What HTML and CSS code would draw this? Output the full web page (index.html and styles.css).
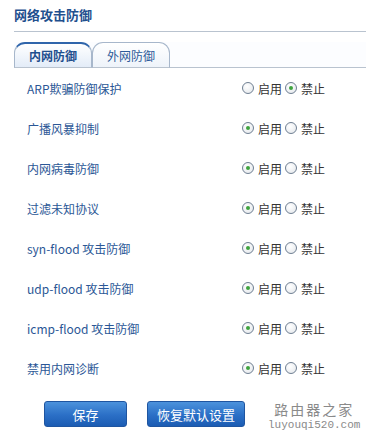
FILE: index.html
```html
<!DOCTYPE html>
<html lang="zh">
<head>
<meta charset="utf-8">
<link rel="stylesheet" href="styles.css">
</head>
<body>
<div class="page">
  <h1 class="title">网络攻击防御</h1>
  <div class="tabs">
    <div class="tab active">内网防御</div>
    <div class="tab">外网防御</div>
    <div class="tab-fill"></div>
  </div>
  <div class="rows">
    <div class="row"><span class="label">ARP欺骗防御保护</span><span class="opts"><span class="radio"></span><span class="opt">启用</span><span class="radio on"></span><span class="opt">禁止</span></span></div>
    <div class="row"><span class="label">广播风暴抑制</span><span class="opts"><span class="radio on"></span><span class="opt">启用</span><span class="radio"></span><span class="opt">禁止</span></span></div>
    <div class="row"><span class="label">内网病毒防御</span><span class="opts"><span class="radio on"></span><span class="opt">启用</span><span class="radio"></span><span class="opt">禁止</span></span></div>
    <div class="row"><span class="label">过滤未知协议</span><span class="opts"><span class="radio on"></span><span class="opt">启用</span><span class="radio"></span><span class="opt">禁止</span></span></div>
    <div class="row"><span class="label">syn-flood 攻击防御</span><span class="opts"><span class="radio on"></span><span class="opt">启用</span><span class="radio"></span><span class="opt">禁止</span></span></div>
    <div class="row"><span class="label">udp-flood 攻击防御</span><span class="opts"><span class="radio on"></span><span class="opt">启用</span><span class="radio"></span><span class="opt">禁止</span></span></div>
    <div class="row"><span class="label">icmp-flood 攻击防御</span><span class="opts"><span class="radio on"></span><span class="opt">启用</span><span class="radio"></span><span class="opt">禁止</span></span></div>
    <div class="row"><span class="label">禁用内网诊断</span><span class="opts"><span class="radio on"></span><span class="opt">启用</span><span class="radio"></span><span class="opt">禁止</span></span></div>
  </div>
  <div class="actions">
    <button class="btn save">保存</button>
    <button class="btn restore">恢复默认设置</button>
    <div class="watermark">
      <span class="wm-cn">路由器之家</span>
      <span class="wm-en">luyouqi520.com</span>
    </div>
  </div>
</div>
</body>
</html>
```
FILE: styles.css
```css
* { box-sizing: border-box; }
html, body { margin: 0; padding: 0; background: #ffffff; }
body {
  font-family: "Noto Sans CJK SC", "Noto Sans", sans-serif;
  width: 366px;
  height: 433px;
  overflow: hidden;
}
.page { padding-top: 7px; }
.title {
  margin: 0 0 0 14px;
  font-size: 13px;
  line-height: 16px;
  font-weight: bold;
  color: #1f4f8e;
  height: 25px;
  border-bottom: 1px solid #b9c3cf;
}
.tabs {
  display: flex;
  align-items: flex-end;
  margin-left: 14px;
  margin-top: 10px;
  height: 26px;
  background: #fcfdff;
}
.tab {
  width: 78px;
  height: 26px;
  border: 1px solid #a7b7cb;
  border-bottom: 1px solid #b9c3cf;
  border-radius: 11px 11px 0 0;
  font-size: 12px;
  line-height: 25px;
  text-align: center;
  color: #2d5a99;
  background: linear-gradient(#ffffff, #eef3fa);
}
.tab.active {
  border-top: 2px solid #2f65ab;
  font-weight: bold;
  color: #1f4f8e;
  line-height: 23px;
  background: linear-gradient(#ffffff, #e3ecf8);
}
.tab-fill {
  flex: 1;
  height: 26px;
  border-bottom: 1px solid #b9c3cf;
}
.rows { display: flex; flex-direction: column; }
.row {
  height: 40px;
  display: flex;
  align-items: center;
  padding-left: 27px;
}
.label {
  flex: 1;
  font-size: 12px;
  color: #2b5796;
}
.opts {
  display: flex;
  align-items: center;
  width: 124px;
  font-size: 12px;
  color: #333333;
}
.radio {
  width: 12px;
  height: 12px;
  border: 1px solid #6f7f92;
  border-radius: 50%;
  background: radial-gradient(circle at 40% 35%, #ffffff, #e2e6ea);
  margin-right: 4px;
  position: relative;
}
.radio.on::after {
  content: "";
  position: absolute;
  left: 3px;
  top: 3px;
  width: 4px;
  height: 4px;
  border-radius: 50%;
  background: #3fa33f;
}
.opt { margin-right: 3px; }
.actions {
  display: flex;
  align-items: center;
  padding-left: 44px;
  margin-top: 13px;
  height: 26px;
}
.btn {
  height: 26px;
  border: 1px solid #1f55a0;
  border-radius: 3px;
  background: linear-gradient(#4c92dc, #2b6fc6 55%, #1b5cb3);
  color: #ffffff;
  font-family: "Noto Sans CJK SC", sans-serif;
  font-size: 13px;
  padding: 0;
  margin-right: 20px;
}
.save { width: 83px; }
.restore { width: 98px; }
.watermark {
  display: flex;
  flex-direction: column;
  align-items: center;
  gap: 3px;
  margin-left: 3px;
  margin-top: 4px;
  color: #8a8a8a;
}
.wm-cn {
  display: block;
  font-family: "Noto Sans CJK SC", sans-serif;
  font-size: 14px;
  line-height: 15px;
  height: 15px;
  letter-spacing: 2px;
}
.wm-en {
  display: block;
  font-family: "Liberation Mono", monospace;
  font-size: 11px;
  line-height: 11px;
  height: 11px;
}
```
